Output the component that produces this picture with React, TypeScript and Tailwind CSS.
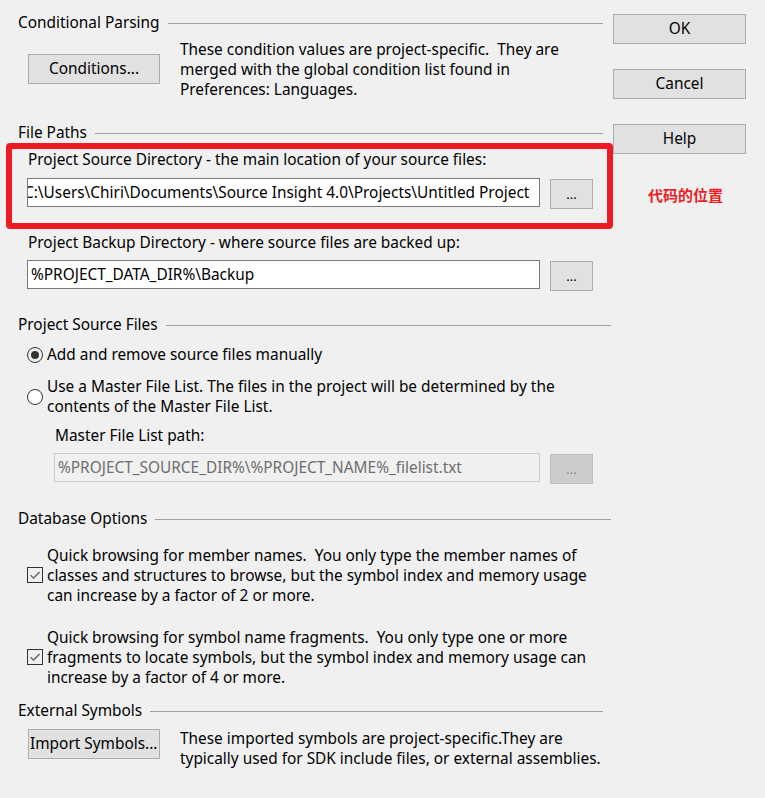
import type { ReactNode } from 'react'

const FONT = "font-['Noto_Sans','Noto_Sans_CJK_SC',sans-serif]"

function Header({ title, line = 'mr-[8px]' }: { title: string; line?: string }) {
  return (
    <div className={`flex items-center h-[20px] ${line}`}>
      <span className="whitespace-nowrap">{title}</span>
      <div className="flex-1 h-px bg-[#a0a0a0] ml-[8px]" />
    </div>
  )
}

function Button({ children, className = '' }: { children: ReactNode; className?: string }) {
  return (
    <div
      className={`flex items-center justify-center bg-[#e1e1e1] border border-[#adadad] ${className}`}
    >
      {children}
    </div>
  )
}

function PathRow({ value, shift = false }: { value: string; shift?: boolean }) {
  return (
    <div className="flex items-start ml-[9px] h-[29px]">
      <div className="w-[513px] h-[29px] bg-white border border-[#7a7a7a] overflow-hidden flex items-center pl-[3px]">
        <span className={`whitespace-nowrap ${shift ? '-ml-[7px]' : ''}`}>{value}</span>
      </div>
      <Button className="w-[43px] h-[30px] ml-[10px] mt-[1px] text-[13px] shrink-0">...</Button>
    </div>
  )
}

function Check({ top }: { top: string }) {
  return (
    <div className={`w-[16px] h-[16px] border border-[#333] flex items-center justify-center ${top}`}>
      <svg width="12" height="12" viewBox="0 0 12 12">
        <path d="M1.5 6.2 L4.5 9.2 L10.5 3" fill="none" stroke="#555" strokeWidth="1.2" />
      </svg>
    </div>
  )
}

export default function App() {
  return (
    <div className={`w-[765px] h-[798px] bg-[#f0f0f0] text-[15.4px] leading-[20px] text-black relative flex ${FONT}`}>
      <div className="w-[611px] pl-[18px] pt-[13px]">
        {/* Conditional Parsing */}
        <Header title="Conditional Parsing" />
        <div className="flex mt-[7px]">
          <Button className="w-[132px] h-[30px] ml-[10px] mt-[14px] shrink-0">Conditions...</Button>
          <p className="ml-[20px] w-[405px]">
            These condition values are project-specific.&nbsp; They are merged with the global condition list found in
            Preferences: Languages.
          </p>
        </div>

        {/* File Paths */}
        <div className="mt-[23px]">
          <Header title="File Paths" />
        </div>
        <div className="ml-[10px] mt-[7px] whitespace-nowrap">
          Project Source Directory - the main location of your source files:
        </div>
        <div className="mt-[8px]">
          <PathRow value={'C:\\Users\\Chiri\\Documents\\Source Insight 4.0\\Projects\\Untitled Project'} shift />
        </div>
        <div className="ml-[10px] mt-[26px]">Project Backup Directory - where source files are backed up:</div>
        <div className="mt-[7px]">
          <PathRow value={'%PROJECT_DATA_DIR%\\Backup'} />
        </div>

        {/* Project Source Files */}
        <div className="mt-[26px]">
          <Header title="Project Source Files" line="mr-0" />
        </div>
        <div className="flex items-center mt-[10px] ml-[9px]">
          <div className="w-[16px] h-[16px] rounded-full border border-[#333] flex items-center justify-center">
            <div className="w-[8px] h-[8px] rounded-full bg-[#333]" />
          </div>
          <span className="ml-[4px]">Add and remove source files manually</span>
        </div>
        <div className="flex items-center mt-[12px] ml-[9px]">
          <div className="w-[16px] h-[16px] rounded-full border border-[#333] bg-white shrink-0" />
          <p className="ml-[4px] w-[540px]">
            Use a Master File List. The files in the project will be determined by the contents of the Master File
            List.
          </p>
        </div>
        <div className="ml-[37px] mt-[9px]">Master File List path:</div>
        <div className="flex items-start ml-[36px] mt-[7px] h-[29px]">
          <div className="w-[486px] h-[29px] bg-[#f0f0f0] border border-[#cccccc] flex items-center pl-[3px] text-[#6d6d6d] overflow-hidden">
            <span className="whitespace-nowrap">%PROJECT_SOURCE_DIR%\%PROJECT_NAME%_filelist.txt</span>
          </div>
          <div className="w-[43px] h-[30px] ml-[10px] mt-[1px] shrink-0 bg-[#cccccc] border border-[#bfbfbf] text-[#838383] text-[13px] flex items-center justify-center">
            ...
          </div>
        </div>

        {/* Database Options */}
        <div className="mt-[27px]">
          <Header title="Database Options" line="mr-0" />
        </div>
        <div className="flex mt-[17px] ml-[9px]">
          <Check top="mt-[21px] shrink-0" />
          <p className="ml-[4px] w-[550px]">
            Quick browsing for member names.&nbsp; You only type the member names of classes and structures to browse,
            but the symbol index and memory usage can increase by a factor of 2 or more.
          </p>
        </div>
        <div className="flex mt-[22px] ml-[9px]">
          <Check top="mt-[21px] shrink-0" />
          <p className="ml-[4px] w-[550px]">
            Quick browsing for symbol name fragments.&nbsp; You only type one or more fragments to locate symbols, but
            the symbol index and memory usage can increase by a factor of 4 or more.
          </p>
        </div>

        {/* External Symbols */}
        <div className="mt-[13px]">
          <Header title="External Symbols" />
        </div>
        <div className="flex mt-[8px]">
          <Button className="w-[132px] h-[30px] ml-[10px] shrink-0 !justify-start pl-[1px] whitespace-nowrap">
            Import Symbols...
          </Button>
          <p className="ml-[20px] w-[430px]">
            These imported symbols are project-specific.They are typically used for SDK include files, or external
            assemblies.
          </p>
        </div>
      </div>

      {/* dialog buttons */}
      <div className="pl-[2px] pt-[14px] flex flex-col gap-[25px]">
        <Button className="w-[133px] h-[30px]">OK</Button>
        <Button className="w-[133px] h-[30px]">Cancel</Button>
        <Button className="w-[133px] h-[30px]">Help</Button>
      </div>

      {/* annotation drawn over the dialog */}
      <div className="absolute left-[6px] top-[143px] w-[607px] h-[86px] border-[6px] border-[#ed1c24] rounded-[4px]" />
      <div className="absolute left-[648px] top-[185px] text-[15px] font-bold text-[#ed1c24] leading-[20px]">
        代码的位置
      </div>
    </div>
  )
}
